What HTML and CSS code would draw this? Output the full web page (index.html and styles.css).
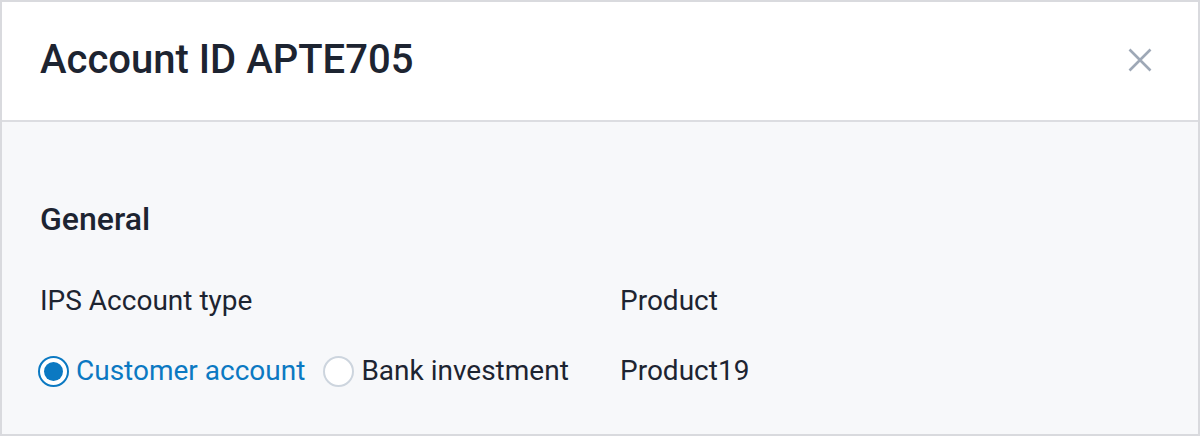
FILE: index.html
```html
<!DOCTYPE html>
<html lang="en">
<head>
<meta charset="utf-8">
<title>Account ID APTE705</title>
<link rel="stylesheet" href="styles.css">
</head>
<body>
<div class="dialog">
  <header class="dialog-header">
    <h1 class="dialog-title">Account ID APTE705</h1>
    <button class="close-btn" aria-label="Close">
      <svg width="24" height="24" viewBox="0 0 24 24" aria-hidden="true">
        <path d="M1.5 1.5 L22.5 22.5 M22.5 1.5 L1.5 22.5" stroke="#9ea8b6" stroke-width="2.6" fill="none"/>
      </svg>
    </button>
  </header>
  <section class="dialog-body">
    <h2 class="section-title">General</h2>
    <div class="fields">
      <div class="field">
        <div class="field-label">IPS Account type</div>
        <div class="field-value radios">
          <label class="radio checked"><span class="radio-circle"></span><span class="radio-text">Customer account</span></label>
          <label class="radio"><span class="radio-circle"></span><span class="radio-text">Bank investment</span></label>
        </div>
      </div>
      <div class="field">
        <div class="field-label">Product</div>
        <div class="field-value">Product19</div>
      </div>
    </div>
  </section>
</div>
</body>
</html>
```

FILE: styles.css
```css
* { box-sizing: border-box; }
html, body { margin: 0; padding: 0; background: #ffffff; }
body {
  font-family: Roboto, "Noto Sans", "Liberation Sans", sans-serif;
  color: #1d2431;
}
.dialog {
  width: 1200px;
  height: 436px;
  border: 2px solid #d9dade;
  display: flex;
  flex-direction: column;
  overflow: hidden;
}
.dialog-header {
  height: 120px;
  flex: none;
  background: #ffffff;
  border-bottom: 2px solid #dcdde1;
  display: flex;
  align-items: center;
  justify-content: space-between;
  padding: 0 46px 2px 38px;
}
.dialog-title {
  margin: 0;
  font-size: 40px;
  font-weight: 500;
  line-height: 48px;
  color: #1d2431;
}
.close-btn {
  border: 0;
  background: none;
  padding: 0;
  width: 24px;
  height: 24px;
  display: block;
  cursor: pointer;
}
.close-btn svg { display: block; }
.dialog-body {
  flex: 1;
  background: #f7f8fa;
  padding: 77px 38px 0;
}
.section-title {
  margin: 0;
  font-size: 32px;
  font-weight: 500;
  line-height: 40px;
}
.fields {
  margin-top: 42px;
  display: grid;
  grid-template-columns: 1fr 1fr;
  column-gap: 40px;
}
.field-label {
  font-size: 28px;
  line-height: 40px;
}
.field-value {
  margin-top: 30px;
  font-size: 28px;
  line-height: 40px;
  height: 40px;
  display: flex;
  align-items: center;
}
.radios { gap: 18px; }
.radio {
  display: flex;
  align-items: center;
  gap: 7px;
  cursor: pointer;
}
.radio:first-child { margin-left: -2px; }
.radio-circle {
  width: 31px;
  height: 31px;
  border-radius: 50%;
  border: 2px solid #cdd5de;
  background: #ffffff;
  display: flex;
  align-items: center;
  justify-content: center;
  flex: none;
}
.radio.checked .radio-circle {
  border-color: #0b79c2;
}
.radio.checked .radio-circle::after {
  content: "";
  width: 19px;
  height: 19px;
  border-radius: 50%;
  background: #0b79c2;
}
.radio.checked .radio-text { color: #0b79c2; }
```
